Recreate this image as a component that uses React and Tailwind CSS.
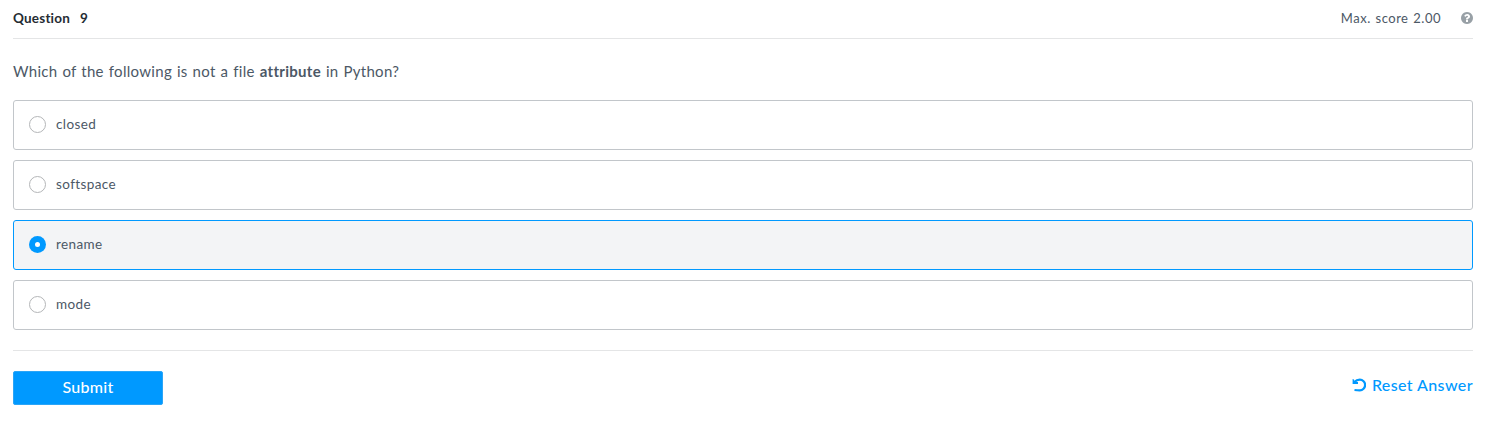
const options = ["closed", "softspace", "rename", "mode"];
const selected = "rename";

function Radio({ checked }) {
  return checked ? (
    <span className="mb-px flex size-[17px] shrink-0 items-center justify-center rounded-full bg-[#0099ff]">
      <span className="size-[5px] rounded-full bg-white" />
    </span>
  ) : (
    <span className="mb-px size-[17px] shrink-0 rounded-full border border-[#b4b6b8] bg-white" />
  );
}

function Option({ label, checked }) {
  return (
    <label
      className={`flex h-[50px] items-center gap-2.5 rounded-[3px] border pb-px pl-[15px] text-[13.5px] ${
        checked ? "border-[#0099ff] bg-[#f3f4f6]" : "border-[#c2c6ca] bg-white"
      }`}
    >
      <Radio checked={checked} />
      <span className="tracking-[0.4px]">{label}</span>
    </label>
  );
}

function HelpIcon() {
  return (
    <svg viewBox="128 128 1536 1536" className="mb-px size-3 text-[#98a0a6]" fill="currentColor">
      <path d="M1024 1376v-192q0-14-9-23t-23-9h-192q-14 0-23 9t-9 23v192q0 14 9 23t23 9h192q14 0 23-9t9-23zm256-672q0-88-55.5-163t-138.5-116-170-41q-243 0-371 213-15 24 8 42l132 100q7 6 19 6 16 0 25-12 53-68 86-92 34-24 86-24 48 0 85.5 26t37.5 59q0 38-20 61t-68 45q-63 28-115.5 86.5t-52.5 125.5v36q0 14 9 23t23 9h192q14 0 23-9t9-23q0-19 21.5-49.5t54.5-49.5q32-18 49-28.5t46-35 44.5-48 28-60.5 12.5-81zm384 192q0 209-103 385.5t-279.5 279.5-385.5 103-385.5-103-279.5-279.5-103-385.5 103-385.5 279.5-279.5 385.5-103 385.5 103 279.5 279.5 103 385.5z" />
    </svg>
  );
}

function UndoIcon() {
  return (
    <svg viewBox="0 0 14 14" className="size-3.5" fill="none">
      <path d="M0.6 1L2 1.4L2.5 3.2L6 4V5.9H0.6Z" fill="currentColor" />
      <path
        d="M2.4 4C3.8 2.5 5.6 1.7 7.8 1.7A5.3 5.3 0 0 1 7.8 12.3C6 12.3 4.2 12.2 2.5 12"
        stroke="currentColor"
        strokeWidth="2.2"
      />
    </svg>
  );
}

export default function App() {
  return (
    <main className="h-[421px] bg-white pl-[13px] pr-[22px] font-['Lato',sans-serif] text-[#4c5866]">
      <header className="flex h-[39px] items-center justify-between border-b border-[#e4e5e6] pb-px text-[13px]">
        <h1 className="flex gap-2.5 text-[13.5px] font-bold tracking-[0.2px] text-[#252c33]">
          <span>Question</span>
          <span>9</span>
        </h1>
        <div className="flex items-center gap-5">
          <span className="tracking-[0.5px] [word-spacing:1px]">Max. score 2.00</span>
          <HelpIcon />
        </div>
      </header>
      <p className="pt-5 text-[15px] leading-6 tracking-[0.3px] [word-spacing:0.8px]">
        Which of the following is not a file <strong>attribute</strong> in Python?
      </p>
      <div className="mt-[17px] flex flex-col gap-2.5">
        {options.map((o) => (
          <Option key={o} label={o} checked={o === selected} />
        ))}
      </div>
      <footer className="mt-5 flex items-start justify-between border-t border-[#e4e5e6] pt-5">
        <button className="h-[34px] w-[150px] rounded-[2px] border border-[#2ba5f7] bg-[#0099ff] pb-0.5 text-base font-medium tracking-[0.25px] text-white">
          Submit
        </button>
        <button className="flex h-7 items-center gap-1.5 text-base font-medium tracking-[0.4px] text-[#0099ff]">
          <UndoIcon />
          <span>Reset Answer</span>
        </button>
      </footer>
    </main>
  );
}
